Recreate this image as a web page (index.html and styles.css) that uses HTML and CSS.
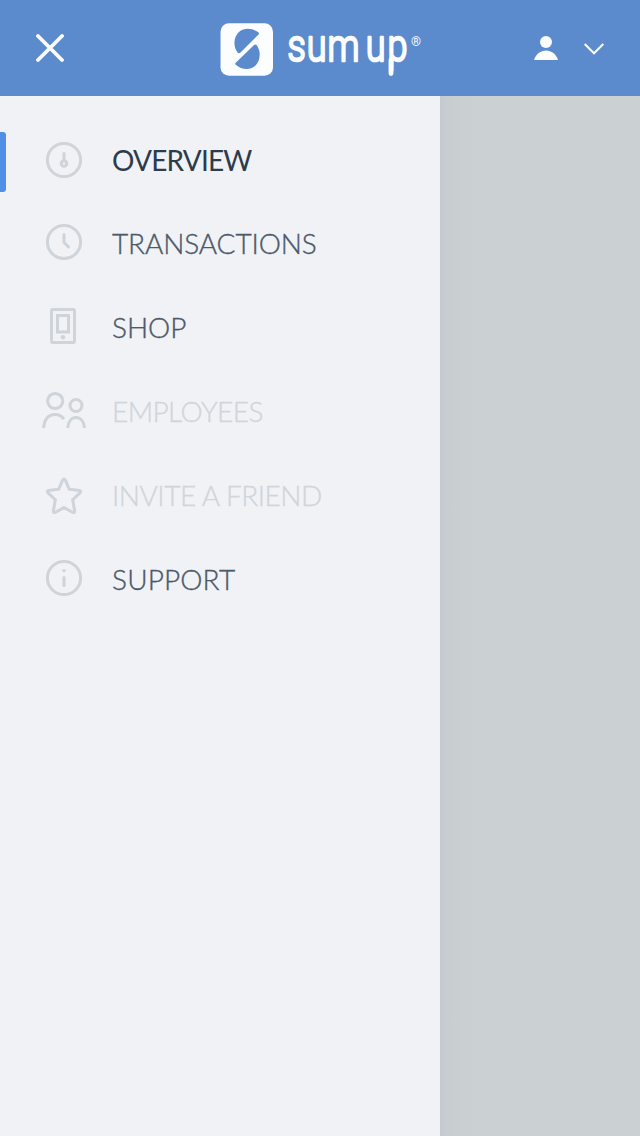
FILE: index.html
```html
<!DOCTYPE html>
<html lang="en">
<head>
<meta charset="utf-8">
<title>SumUp</title>
<link rel="stylesheet" href="styles.css">
</head>
<body>
<header class="topbar">
  <svg class="close" viewBox="0 0 28 28"><path d="M2 2 26 26M26 2 2 26"/></svg>
  <svg class="brand" viewBox="220 0 204 96">
    <rect class="brand-box" x="220.5" y="23.3" width="52.5" height="52.5" rx="8.500"/>
    <path class="brand-mark" d="M258.500 32.500C252 27.500 243 27.500 238 33C233.500 38 233.200 47 237.500 52.500Q239 54 240.500 52.500L258.500 34.500Q259.500 33.300 258.500 32.500ZM235.500 64.500C242 70.500 251 70.500 256 65C260.500 60 261 51.500 257 45.500Q255.500 43.500 253.800 45.200L235.500 63Q234.700 63.800 235.500 64.500Z"/>
    <text class="wordmark" transform="scale(.8 1)" x="359.5 383.3 409.5 457.3 484.500" y="61">sumup</text>
    <path class="stem" d="M391 60V73.500"/>
    <text class="registered" x="411" y="45.500" textLength="10" lengthAdjust="spacingAndGlyphs">®</text>
  </svg>
  <div class="account">
    <svg class="person" viewBox="0 0 24 24"><circle cx="12" cy="6" r="6"/><path d="M0 24C2 18 6.500 14.500 12 14.500S22 18 24 24Z"/></svg>
    <svg class="chevron" viewBox="0 0 20 12"><path d="M.7 1 10 10.300 19.300 1"/></svg>
  </div>
</header>
<main class="content">
  <nav class="menu">
    <a class="item active">
      <svg class="icon" viewBox="0 0 44 84"><circle cx="22" cy="42" r="16.600"/><path d="M22 35.500V41"/><circle class="knob" cx="22" cy="45.500" r="2.800"/></svg>
      <span class="label overview">OVERVIEW</span>
    </a>
    <a class="item">
      <svg class="icon" viewBox="0 0 44 84"><circle cx="22" cy="40" r="16.600"/><path d="M22 32.500V40.500L26.500 45"/></svg>
      <span class="label transactions">TRANSACTIONS</span>
    </a>
    <a class="item">
      <svg class="icon" viewBox="0 0 44 84"><rect x="9.500" y="23.500" width="23" height="33" rx="1.500"/><rect x="15.500" y="29.500" width="11" height="16.500"/><circle class="dot" cx="21" cy="51.200" r="2.300"/></svg>
      <span class="label shop">SHOP</span>
    </a>
    <a class="item disabled">
      <svg class="icon" viewBox="0 0 44 84"><circle cx="13.200" cy="31" r="7.600"/><circle cx="34" cy="35.500" r="6"/><path class="flat" d="M1.500 58C2.500 49 7 44.500 13 44.500Q18.500 44.500 22 49M25.700 58C26.200 51.500 29.500 47.500 34 47.500S42 51.500 42.500 58"/></svg>
      <span class="label employees">EMPLOYEES</span>
    </a>
    <a class="item disabled">
      <svg class="icon star" viewBox="0 0 44 84"><path d="M20.600 26.200Q22 24 23.400 26.200L27.200 35.200 37.500 36.500Q39.600 37.200 38 38.900L30.700 45.700 32.700 57Q32.700 59.200 30.700 58.400L22 53.500 13.300 58.400Q11.300 59.200 11.300 57L13.300 45.700 6 38.900Q4.400 37.200 6.500 36.500L16.800 35.200Z"/></svg>
      <span class="label invite">INVITE A FRIEND</span>
    </a>
    <a class="item">
      <svg class="icon" viewBox="0 0 44 84"><circle cx="22" cy="40" r="16.600"/><path d="M22 39.500V47.500"/><circle class="dot" cx="22" cy="32.600" r="1.700"/></svg>
      <span class="label support">SUPPORT</span>
    </a>
  </nav>
  <div class="backdrop"></div>
</main>
</body>
</html>
```
FILE: styles.css
```css
* { box-sizing: border-box; }
body {
  margin: 0;
  display: flex;
  flex-direction: column;
  height: 1136px;
  overflow: hidden;
  font-family: Lato, "Open Sans", sans-serif;
}
svg { display: block; fill: none; }
.topbar {
  display: grid;
  grid-template-columns: 184px 204px 1fr;
  align-items: center;
  height: 96px;
  flex: none;
  padding: 0 36px;
  background: #5b8bcc;
}
.close { width: 28px; height: 28px; stroke: #fcfdfe; stroke-width: 3.8; stroke-linecap: round; }
.brand { width: 204px; height: 96px; }
.brand-box { fill: #fcfdfe; }
.brand-mark { fill: #5b8bcc; }
.wordmark {
  font-family: Roboto, sans-serif;
  font-size: 45px;
  font-weight: 300;
  fill: #fcfdfe;
  stroke: #fcfdfe;
  stroke-width: 2.5;
  stroke-linejoin: round;
}
.stem { stroke: #fcfdfe; stroke-width: 4.8; stroke-linecap: round; }
.registered { font-family: Roboto, sans-serif; font-size: 13px; fill: #fcfdfe; }
.account { display: flex; align-items: center; justify-content: flex-end; gap: 26px; }
.person { width: 24px; height: 24px; fill: #fcfdfe; }
.chevron { width: 20px; height: 12px; margin-top: 2px; stroke: #fcfdfe; stroke-width: 2; }
.content { display: flex; flex: 1; }
.menu { width: 440px; padding-top: 22px; background: #f0f2f6; }
.item {
  display: flex;
  align-items: center;
  height: 84px;
  padding-left: 42px;
  gap: 26px;
  color: #4c5968;
  position: relative;
}
.active { color: #2d3b4c; }
.active::before {
  content: "";
  position: absolute;
  left: 0;
  top: 14px;
  width: 6px;
  height: 60px;
  border-radius: 0 3px 3px 0;
  background: #508fe5;
}
.disabled { color: #d0d5db; }
.icon {
  width: 44px;
  height: 84px;
  flex: none;
  stroke: #ced4da;
  stroke-width: 3;
  stroke-linecap: round;
}
.icon .flat { stroke-linecap: butt; }
.icon .dot { fill: #ced4da; stroke: none; }
.label {
  padding-bottom: 2px;
  font-size: 28px;
  font-weight: 300;
  line-height: 34px;
  white-space: nowrap;
  -webkit-text-stroke: .35px currentColor;
}
.active .label { padding-bottom: 0; font-weight: 400; -webkit-text-stroke: 0; }
.overview { letter-spacing: -.8px; }
.transactions { letter-spacing: -.12px; }
.employees { letter-spacing: -.6px; }
.invite { letter-spacing: -.48px; }
.support { letter-spacing: .15px; }
.backdrop {
  flex: 1;
  background: linear-gradient(90deg, #c2cad0 0, #c8cdd1 8px, #cacfd2 22px, #cbd0d3 40px);
}
```
